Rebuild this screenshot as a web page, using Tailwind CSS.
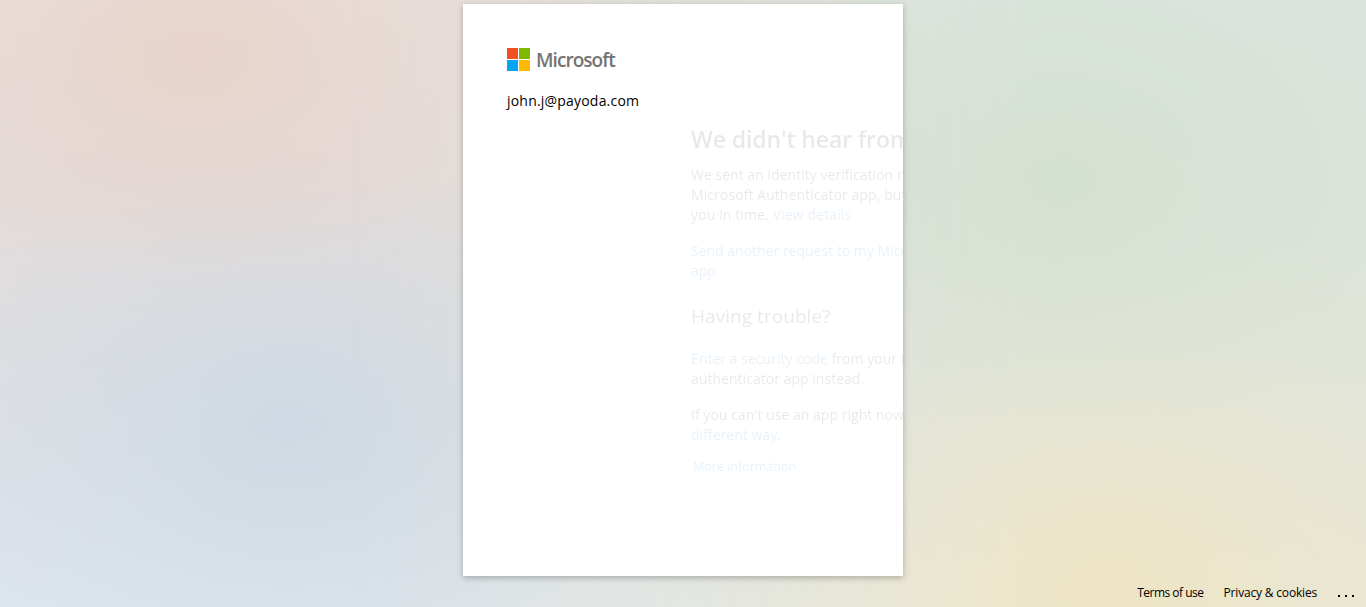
<!DOCTYPE html>
<html lang="en">
<head>
<meta charset="utf-8">
<title>Sign in to your account</title>
<script src="https://cdn.jsdelivr.net/npm/@tailwindcss/browser@4"></script>
</head>
<body class="relative h-[607px] overflow-hidden font-['Open_Sans','Noto_Sans',sans-serif] text-[14px] text-black">
  <!-- soft pastel backdrop -->
  <div class="absolute inset-0 bg-[linear-gradient(to_bottom,#e9dedb_0%,#e4dbd9_30%,#dedee0_55%,#dce2e9_85%,#dde5ed_100%)]"></div>
  <div class="absolute inset-0 bg-[linear-gradient(to_bottom,#dae4dd_0%,#dce4da_35%,#e2e5d8_65%,#e9e7d5_100%)] [mask-image:linear-gradient(to_right,transparent_25%,black_75%)]"></div>
  <div class="absolute inset-0 bg-[radial-gradient(ellipse_330px_230px_at_195px_55px,#e8d0c5b8,#e8d0c54d_50%,#e8d0c500),radial-gradient(ellipse_380px_270px_at_288px_428px,#cad7e3b8,#cad7e34d_50%,#cad7e300),radial-gradient(ellipse_360px_260px_at_1060px_180px,#d0decc9c,#d0decc40_50%,#d0decc00),radial-gradient(ellipse_360px_270px_at_1110px_590px,#f0e4c0c4,#f0e4c04d_50%,#f0e4c000)]"></div>

  <main class="relative mx-auto flex h-[576px] w-[440px] flex-col pt-1">
    <section class="flex h-[572px] flex-col overflow-hidden bg-white pl-11 pt-11 shadow-[0_2px_6px_rgba(0,0,0,0.25)]">
      <div class="flex h-6 items-start">
        <svg class="h-[23px] w-[23px] shrink-0" viewBox="0 0 23 23" shape-rendering="crispEdges">
          <path fill="#f25022" d="M0 0h11v11H0z"/><path fill="#7fba00" d="M12 0h11v11H12z"/>
          <path fill="#00a4ef" d="M0 12h11v11H0z"/><path fill="#ffb900" d="M12 12h11v11H12z"/>
        </svg>
        <span class="ml-1.5 text-[19px] font-semibold leading-6 tracking-[-0.95px] text-[#737373]">Microsoft</span>
      </div>
      <div class="mt-[19px] h-5 whitespace-nowrap text-[14px] leading-5 tracking-[0.2px]">john.j@payoda.com</div>

      <div class="ml-[184px] mt-[13px] flex w-[352px] flex-col whitespace-nowrap leading-5 text-black opacity-[0.085]">
        <h1 class="h-[30px] text-[23px] font-semibold leading-[30px] tracking-[-0.1px]">We didn't hear from you</h1>
        <p class="mt-[11px] tracking-[0.03px]">We sent an identity verification request to your<br><span class="tracking-[0.08px]">Microsoft Authenticator app, but we didn't hear from</span><br><span class="tracking-[0.12px]">you in time. <a class="text-[#0067b8]">View details</a></span></p>
        <p class="mt-4 text-[#0067b8]">Send another request to my Microsoft Authenticator<br>app</p>
        <h2 class="mt-[21px] h-7 text-[19px] leading-7 tracking-[0.05px]">Having trouble?</h2>
        <p class="mt-[19px] tracking-[0.03px]"><a class="text-[#0067b8]">Enter a security code</a> from your Microsoft account or<br>authenticator app instead.</p>
        <p class="mt-4 tracking-[0.03px]">If you can't use an app right now <a class="text-[#0067b8]">get a code a</a><br><a class="text-[#0067b8]">different way.</a></p>
        <a class="ml-0.5 mt-3 text-[12.5px] leading-5 text-[#0067b8]">More information</a>
      </div>
    </section>
  </main>

  <footer class="relative mt-[3px] flex h-7 items-center justify-end pr-[11px] text-[12px] leading-7">
    <a class="mr-5 tracking-[-0.5px]">Terms of use</a>
    <a class="mr-[21px] tracking-[-0.18px]">Privacy &amp; cookies</a>
    <svg class="mt-[5px] h-[2px] w-[17px]" viewBox="0 0 17 2" shape-rendering="crispEdges"><path d="M0 0h2v2H0zM7 0h2v2H7zM14 0h2v2h-2z"/></svg>
  </footer>
</body>
</html>
